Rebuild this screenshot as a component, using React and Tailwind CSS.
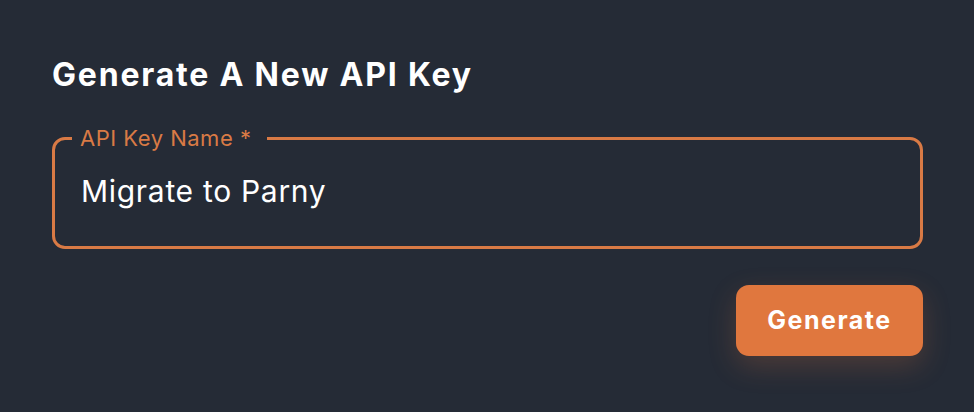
import React from "react";

function App() {
  return (
    <div className="w-full h-[412px] bg-[#252b36] pl-[52px] pr-[51px] pt-[55px] font-['Inter',sans-serif]">
      <h1 className="text-white text-[32px] font-bold leading-[40px] tracking-[1.8px]">
        Generate A New API Key
      </h1>

      <fieldset className="mt-[31px] h-[123px] border-[3px] border-[#d97a45] rounded-[13px] pl-[17px] pr-[24px]">
        <legend className="pl-[8px] pr-[16px] text-[#d97a45] text-[22px] leading-[24px] tracking-[0.5px]">
          API Key Name *
        </legend>
        <input
          className="w-full ml-[9px] mt-[23px] bg-transparent outline-none text-white text-[30px] leading-[36px] tracking-[0.7px]"
          type="text"
          defaultValue="Migrate to Parny"
        />
      </fieldset>

      <div className="flex justify-end mt-[36px]">
        <button className="w-[187px] h-[71px] bg-[#e0773e] rounded-[13px] text-white text-[25px] font-bold tracking-[1.5px] shadow-[0_10px_28px_rgba(224,119,62,0.22)]">
          Generate
        </button>
      </div>
    </div>
  );
}

export default App;
